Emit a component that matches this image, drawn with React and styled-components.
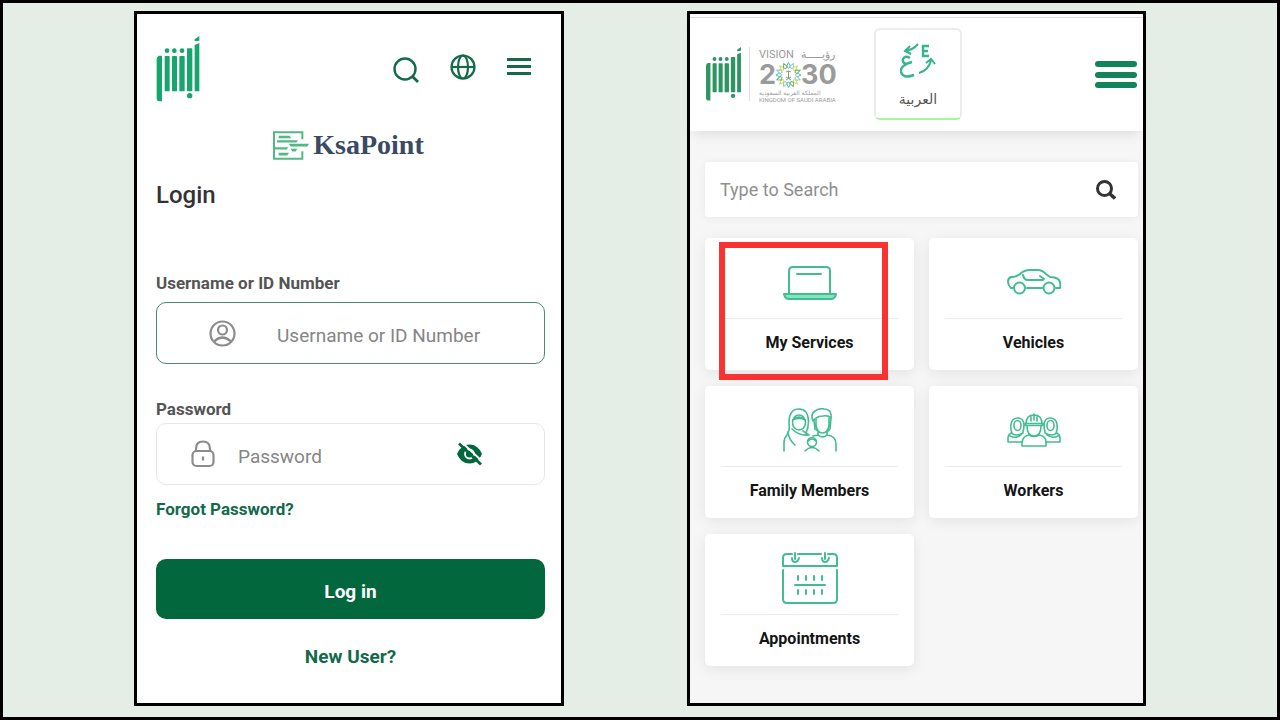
import React from "react";
import styled, { createGlobalStyle, css } from "styled-components";

const GlobalStyle = createGlobalStyle`
  * { box-sizing: border-box; }
  body {
    margin: 0;
    font-family: Roboto, "Liberation Sans", sans-serif;
    background: #e4eee6;
  }
  h1, p { margin: 0; }
  button {
    padding: 0;
    border: 0;
    background: none;
    font: inherit;
    cursor: pointer;
  }
  svg { display: block; flex: none; }
`;

const Page = styled.main`
  min-height: 100vh;
  padding: 8px 131px 11px;
  border: 3px solid #000;
  background: #e4eee6;
  display: grid;
  grid-template-columns: minmax(0, 430fr) minmax(0, 459fr);
  gap: 123px;
`;

const Panel = styled.section`
  border: 3px solid #000;
  background: ${(p) => p.$bg};
  display: flex;
  flex-direction: column;
`;

const LoginPanel = styled(Panel)`
  padding: 22px 16px 33px 19px;
`;

const LoginHeader = styled.header`
  display: flex;
  align-items: flex-start;
  justify-content: space-between;
  height: 65px;
`;

const HeaderActions = styled.nav`
  display: flex;
  align-items: center;
  gap: 31px;
  padding: 15px 14px 0 0;
`;

const IconButton = styled.button`
  color: ${(p) => p.$color || "#146b4a"};
  display: grid;
  place-items: center;
`;

const Brand = styled.div`
  display: flex;
  align-items: center;
  justify-content: center;
  gap: 4px;
  height: 30px;
  margin-top: 29px;
  padding-right: 4px;
  color: #3b4a63;
  font: 700 28px/30px "Liberation Serif", serif;
`;

const Title = styled.h1`
  margin-top: 20px;
  color: #333;
  font-size: 24px;
  line-height: 30px;
  font-weight: 500;
`;

const Form = styled.form`
  display: flex;
  flex-direction: column;
  margin-top: 63px;
`;

const FieldLabel = styled.label`
  color: #555;
  font-size: 17px;
  line-height: 20px;
  font-weight: 700;
`;

const Field = styled.div`
  display: flex;
  align-items: center;
  height: 62px;
  margin-bottom: 35px;
  margin-top: 9px;
  padding: 0 52px;
  gap: 41px;
  border: 1px solid #4a8a74;
  border-radius: 10px;
  color: #8c8c8c;
  ${(p) =>
    p.$quiet &&
    css`
      margin-top: 4px;
      margin-bottom: 14px;
      padding: 0 61px 0 33px;
      gap: 22px;
      border-color: #e6e6e6;
    `}
`;

const TextInput = styled.input`
  flex: 1;
  min-width: 0;
  padding: 6px 0 0;
  border: 0;
  outline: 0;
  background: none;
  font: 400 19px/24px Roboto, "Liberation Sans", sans-serif;
  color: #555;
  &::placeholder { color: #858585; opacity: 1; }
`;

const TextLink = styled.a`
  align-self: ${(p) => (p.$center ? "center" : "flex-start")};
  margin-top: ${(p) => (p.$center ? "26px" : "0")};
  color: #14694a;
  font-size: ${(p) => (p.$center ? "19px" : "17px")};
  line-height: ${(p) => (p.$center ? "24px" : "20px")};
  font-weight: 700;
  text-decoration: none;
`;

const SubmitButton = styled.button`
  height: 60px;
  margin-top: 40px;
  padding-top: 5px;
  border-radius: 10px;
  background: #03673e;
  color: #fff;
  font-size: 19px;
  font-weight: 700;
`;

const TopRule = styled.div`
  height: 4px;
  border-bottom: 1px solid #dcdcdc;
  background: #fff;
`;

const PortalHeader = styled.header`
  display: flex;
  align-items: flex-start;
  height: 113px;
  padding: 10px 6px 0 15px;
  background: #fff;
  box-shadow: 0 6px 12px -4px rgba(0, 0, 0, 0.12);
`;

const Logos = styled.div`
  display: flex;
  align-items: center;
  margin-top: 19px;
`;

const Vision = styled.div`
  margin-left: 7px;
  padding-left: 9px;
  border-left: 1px solid #dedede;
  width: 86px;
  height: 54px;
  color: #9a9a9a;
`;

const VisionWord = styled.div`
  display: flex;
  justify-content: space-between;
  align-items: center;
  margin-top: 2px;
  font-size: 11px;
  line-height: 12px;
  white-space: nowrap;
`;

const VisionYear = styled.div`
  display: flex;
  align-items: center;
  font: 700 27px/24px Inter, sans-serif;
`;

const VisionSmall = styled.p`
  font: 400 6px/7px "DejaVu Sans", sans-serif;
  font-family: ${(p) => (p.$latin ? "Roboto" : '"DejaVu Sans"')}, sans-serif;
  white-space: nowrap;
`;

const LanguageButton = styled.button`
  display: flex;
  flex-direction: column;
  align-items: center;
  width: 88px;
  height: 92px;
  margin-left: 39px;
  padding-top: 13px;
  border: 2px solid #ececec;
  border-bottom-color: #a6f59a;
  border-radius: 6px;
  color: #555;
  font: 400 14px/24px "DejaVu Sans", sans-serif;
  svg { margin-bottom: 8px; }
`;

const MenuButton = styled(IconButton)`
  margin: 33px 0 0 auto;
`;

const PortalBody = styled.div`
  flex: 1;
  padding: 31px 5px 37px 15px;
`;

const SearchBar = styled.form`
  display: flex;
  align-items: center;
  height: 55px;
  padding: 0 22px 0 15px;
  border-radius: 4px;
  background: #fff;
  box-shadow: 0 1px 8px rgba(0, 0, 0, 0.06);
`;

const SearchInput = styled(TextInput)`
  padding: 0;
  font-size: 18px;
  &::placeholder { color: #8f8f8f; }
`;

const Services = styled.div`
  display: grid;
  grid-template-columns: repeat(2, minmax(0, 1fr));
  gap: 16px 15px;
  margin-top: 21px;
`;

const Card = styled.a`
  position: relative;
  height: 132px;
  padding: 0 16px;
  border-radius: 5px;
  background: #fff;
  box-shadow: 0 3px 14px rgba(0, 0, 0, 0.08);
  color: #151515;
  text-align: center;
  text-decoration: none;
  font-size: 16px;
  line-height: 48px;
  font-weight: 700;
`;

const CardIcon = styled.div`
  display: grid;
  place-items: center;
  height: 81px;
  padding-top: 8px;
  border-bottom: 1px solid #ebebeb;
`;

const Highlight = styled.span`
  position: absolute;
  inset: 4px 26px -10px 14px;
  border: 6px solid #fb3232;
`;

function AbsherLogo({ width, height, color }) {
  return (
    <svg width={width} height={height} viewBox="0 0 130 198" fill={color} role="img" aria-label="Absher">
      <path d="M8 59h9v137H7q-6-1-6-8V69q0-8 7-10z" />
      <rect x="25" y="60" width="15" height="106" rx="2" />
      <rect x="47" y="60" width="15" height="106" rx="2" />
      <rect x="69" y="60" width="16" height="106" rx="2" />
      <rect x="92" y="37" width="16" height="129" rx="2" />
      <path d="M115 27l14-6v145h-14z" />
      <circle cx="32" cy="44" r="7" />
      <circle cx="54" cy="44" r="7" />
      <circle cx="77" cy="44" r="7" />
      <circle cx="100" cy="179" r="8" />
      <path d="M115 16v-6L129 0v14z" />
    </svg>
  );
}

function KsaPointLogo() {
  return (
    <svg width="36" height="29" viewBox="0 0 108 86" fill="#50b982">
      <path d="M88 24V3H3V83H88V60" fill="none" stroke="#50b982" strokeWidth="6" />
      <path d="M17 14h32l6 7H17zM12 27h63l-5 7H12zM47 38h61l-5 8H53zM3 48h43l-5 7H3zM53 53h20l-5 8H58zM17 65h31l-5 8H17z" />
    </svg>
  );
}

function SearchIcon() {
  return (
    <svg width="26" height="32" viewBox="0 -6 26 32" fill="none" stroke="currentColor" strokeWidth="2.4">
      <circle cx="12" cy="12" r="10.5" />
      <path d="M19 19l6 6" strokeWidth="2.8" />
    </svg>
  );
}

function GlobeIcon() {
  return (
    <svg width="26" height="26" viewBox="0 0 26 26" fill="none" stroke="currentColor" strokeWidth="2.2">
      <circle cx="13" cy="13" r="11.5" />
      <ellipse cx="13" cy="13" rx="5" ry="11.5" />
      <path d="M1.500 13h23" />
    </svg>
  );
}

function MenuIcon() {
  return (
    <svg width="24" height="18" viewBox="0 0 24 18" fill="currentColor">
      <path d="M0 0h24v3H0zM0 7h24v3H0zM0 14h24v3H0z" />
    </svg>
  );
}

function BoldMenuIcon() {
  return (
    <svg width="42" height="28" viewBox="0 0 42 28" fill="currentColor">
      <rect width="42" height="6" rx="3" />
      <rect y="11" width="42" height="6" rx="3" />
      <rect y="21" width="42" height="6" rx="3" />
    </svg>
  );
}

function UserIcon() {
  return (
    <svg width="27" height="27" viewBox="0 0 27 27" fill="none" stroke="currentColor" strokeWidth="2.2">
      <circle cx="13.500" cy="13.500" r="12" />
      <circle cx="13.500" cy="10" r="4.500" />
      <path d="M5 21.500q8.500-8 17 0" />
    </svg>
  );
}

function LockIcon() {
  return (
    <svg width="26" height="28" viewBox="0 0 26 28" fill="none" stroke="currentColor" strokeWidth="2.2">
      <rect x="2.500" y="11" width="21" height="15" rx="4" />
      <path d="M6 11V9q0-7.500 7-7.500T20 9v2M13 16.500v4" />
    </svg>
  );
}

function EyeOffIcon() {
  return (
    <svg width="27" height="24" viewBox="0 0 27 24" fill="none">
      <path d="M1 12Q5 2.500 13.500 2.500T26 12q-4 9.500-12.500 9.500T1 12z" fill="currentColor" />
      <circle cx="13.500" cy="12" r="4.500" stroke="#fff" strokeWidth="1.800" />
      <path d="M5.500 0L27 20" stroke="#fff" strokeWidth="2" />
      <path d="M3 1.500L25 22.500" stroke="currentColor" strokeWidth="2.800" />
    </svg>
  );
}

function BoldSearchIcon() {
  return (
    <svg width="20" height="20" viewBox="0 0 20 20" fill="none" stroke="#333" strokeWidth="3">
      <circle cx="8.500" cy="8.500" r="7" />
      <path d="M13.500 13.500l5.500 5" strokeWidth="3.500" />
    </svg>
  );
}

function VisionEmblem() {
  const colors = ["#61bba0", "#8bc9de", "#d9d85b", "#68b47d"];
  return (
    <svg width="25" height="28" viewBox="0 0 25 28">
      {Array.from({ length: 16 }, (_, i) => (
        <path
          key={i}
          d="M10.500 5.500L12.500 1.500L14.500 5.500L12.500 7z"
          fill="none"
          stroke={colors[i % 4]}
          transform={`rotate(${i * 22.5} 12.5 14)`}
        />
      ))}
      <path d="M12.500 10v7M10 11q2.500-2 5 0M10 16l5 3M15 16l-5 3" fill="none" stroke="#829a8d" />
    </svg>
  );
}

function TranslateIcon() {
  return (
    <svg width="36" height="36" viewBox="0 0 36 36" fill="none" stroke="#35b68a" strokeWidth="2">
      <path d="M18 1Q13 7 5 8M10 3L5 8l6 3" />
      <path d="M29 3h-6v10h6M23 8h5" strokeWidth="2.400" />
      <path d="M10 15q-5-3-7 1-1 4 3 5l6-2M7 21q-7 3-6 8 2 7 13 3" strokeWidth="2.400" />
      <path d="M19 30q10-3 12-13M26 20l5-4 4 5" />
    </svg>
  );
}

const Outline = styled.svg`
  fill: none;
  stroke: #42bd90;
  stroke-width: ${(p) => (p.$fine ? "1.6" : "2")};
  stroke-linecap: round;
  stroke-linejoin: round;
`;

const LaptopIcon = () => (
  <Outline width="54" height="35" viewBox="0 0 54 35">
    <path d="M6 28V6q0-4 4-4h33q4 0 4 4v22M14 9h24" />
    <path d="M1 29h52q-1 5-5 5H6q-4 0-5-5z" fill="#83e5bd" />
  </Outline>
);

const CarIcon = () => (
  <Outline width="54" height="26" viewBox="0 0 54 26">
    <path d="M6 19H4q-3-3-3-6 0-4 3-5 5 0 9-3 4-4 10-4h8q4 0 8 4l4 3q6 0 9 3 2 3 1 8h-4M20 19h15" />
    <circle cx="12.500" cy="19" r="5.500" />
    <circle cx="42" cy="19" r="5.500" />
    <path d="M16 6q1 5 5 5h15M33 7l4 3" />
  </Outline>
);

const FamilyIcon = () => (
  <Outline $fine width="56" height="44" viewBox="0 0 56 44">
    <path d="M2 43v-8q0-5 3-8 3-4 2-12Q7 1 17 1q9 0 9.500 12 0 7-2.500 12l3 2q-10 1-17-6" />
    <path d="M6 24q1 8 7 13M24 25l-3-2" />
    <ellipse cx="17" cy="14.500" rx="6.500" ry="7.500" />
    <path d="M10.500 12q6.500-6 13 0-6.500-3-13 0z" fill="#42bd90" />
    <path d="M31 13q-3-7 2-10 4-3 9-2 8 0 7 9-3-3-8-2-6 0-10 5z" />
    <path d="M34 11v6q1 8 6.500 8T47 17v-7M32 13l1 8 3 2M49 10l-1 11-3 3M36 23v4q5 4 9 0v-4M31 28l5-1M45 27q9 1 9 9v7" />
    <circle cx="30" cy="34" r="4.500" />
    <path d="M26 33q4-4 8 0M23 43q7-7 14 0" />
  </Outline>
);

const WorkersIcon = () => (
  <Outline $fine width="54" height="34" viewBox="0 0 54 34">
    <path id="worker" d="M15 29H1v-4q0-4 4-5-2-4-1-9 1-6 7-6 5 0 6 6 0 5-1 8M4 20q5 4 12 0M3 23q6 3 11-1" />
    <ellipse cx="10.500" cy="12.500" rx="3.500" ry="5" />
    <use href="#worker" transform="matrix(-1 0 0 1 54 0)" />
    <ellipse cx="43.500" cy="12.500" rx="3.500" ry="5" />
    <path d="M15 33v-4q1-6 7-7 5 3 10 0 7 1 7 7v4zM19 11q0-9 8-9t8 9M18 10.500h18v2H18zM20 13q0 10 7 10t7-10M24 4v4M27 1v6M30 4v4" />
  </Outline>
);

const CalendarIcon = () => (
  <Outline width="56" height="52" viewBox="0 0 56 52">
    <path d="M10 2H5Q1 2 1 6v8h54V6q0-4-4-4h-5M16 2h23M1 18v29q0 4 4 4h46q4 0 4-4V18" />
    <path d="M13 1v6M10 6q0 4 3 4t4-4M43 1v6M40 6q0 4 3 4t4-4" />
    <path d="M13 33h30M16 24v4M24 24v4M32 24v4M40 24v4M16 38v4M24 38v4M32 38v4M40 38v4" />
  </Outline>
);

const services = [
  { name: "My Services", Icon: LaptopIcon, highlighted: true },
  { name: "Vehicles", Icon: CarIcon },
  { name: "Family Members", Icon: FamilyIcon },
  { name: "Workers", Icon: WorkersIcon },
  { name: "Appointments", Icon: CalendarIcon },
];

export default function App() {
  return (
    <>
      <GlobalStyle />
      <Page>
        <LoginPanel $bg="#fff">
          <LoginHeader>
            <AbsherLogo width={44} height={66} color="#16a56c" />
            <HeaderActions>
              <IconButton aria-label="Search"><SearchIcon /></IconButton>
              <IconButton aria-label="Language"><GlobeIcon /></IconButton>
              <IconButton aria-label="Menu"><MenuIcon /></IconButton>
            </HeaderActions>
          </LoginHeader>
          <Brand><KsaPointLogo />KsaPoint</Brand>
          <Title>Login</Title>
          <Form onSubmit={(e) => e.preventDefault()}>
            <FieldLabel htmlFor="username">Username or ID Number</FieldLabel>
            <Field>
              <UserIcon />
              <TextInput id="username" placeholder="Username or ID Number" />
            </Field>
            <FieldLabel htmlFor="password">Password</FieldLabel>
            <Field $quiet>
              <LockIcon />
              <TextInput id="password" type="password" placeholder="Password" />
              <IconButton type="button" aria-label="Show password" $color="#03673e">
                <EyeOffIcon />
              </IconButton>
            </Field>
            <TextLink href="#forgot">Forgot Password?</TextLink>
            <SubmitButton type="submit">Log in</SubmitButton>
            <TextLink href="#register" $center>New User?</TextLink>
          </Form>
        </LoginPanel>

        <Panel $bg="#f6f6f6">
          <TopRule />
          <PortalHeader>
            <Logos>
              <AbsherLogo width={37} height={54} color="#2d9562" />
              <Vision>
                <VisionWord><span>VISION</span><span lang="ar">رؤيـــــة</span></VisionWord>
                <VisionYear>2<VisionEmblem />30</VisionYear>
                <VisionSmall lang="ar">المملكة العربية السعودية</VisionSmall>
                <VisionSmall $latin>KINGDOM OF SAUDI ARABIA</VisionSmall>
              </Vision>
            </Logos>
            <LanguageButton lang="ar"><TranslateIcon />العربية</LanguageButton>
            <MenuButton aria-label="Menu" $color="#13845a"><BoldMenuIcon /></MenuButton>
          </PortalHeader>
          <PortalBody>
            <SearchBar role="search" onSubmit={(e) => e.preventDefault()}>
              <SearchInput aria-label="Type to Search" placeholder="Type to Search" />
              <IconButton aria-label="Search"><BoldSearchIcon /></IconButton>
            </SearchBar>
            <Services>
              {services.map(({ name, Icon, highlighted }) => (
                <Card href="#services" key={name}>
                  <CardIcon><Icon /></CardIcon>
                  {name}
                  {highlighted && <Highlight />}
                </Card>
              ))}
            </Services>
          </PortalBody>
        </Panel>
      </Page>
    </>
  );
}
